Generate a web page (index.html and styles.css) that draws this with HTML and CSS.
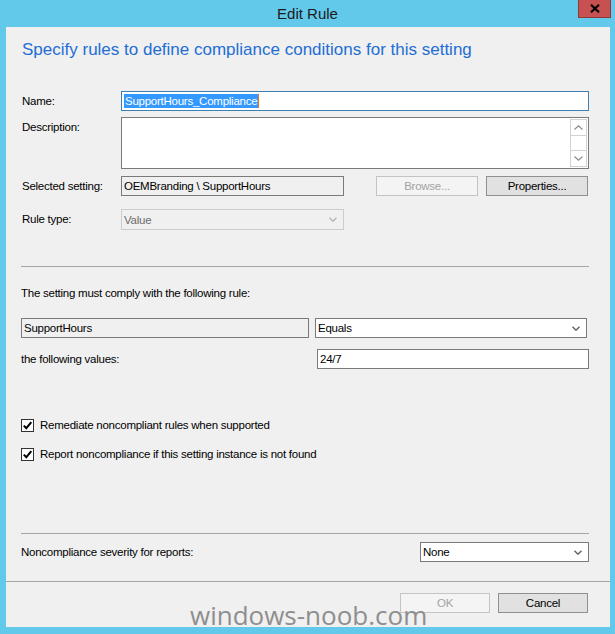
FILE: index.html
```html
<!DOCTYPE html>
<html lang="en">
<head>
    <meta charset="UTF-8">
    <title>Edit Rule</title>
    <link rel="stylesheet" href="styles.css">
</head>
<body>
    <div class="window">
        <div class="titlebar">
            <span class="title">Edit Rule</span>
            <button class="close" title="Close">
                <svg width="10" height="9" viewBox="0 0 10 9"><path d="M1 0.8 L9 8.2 M9 0.8 L1 8.2" stroke="#000" stroke-width="2.2" fill="none"/></svg>
            </button>
        </div>

        <div class="client">
            <div class="header">Specify rules to define compliance conditions for this setting</div>

            <div class="content">
                <div class="row name-row">
                    <span class="label">Name:</span>
                    <div class="field focused"><span class="selected">SupportHours_Compliance</span><span class="caret"></span></div>
                </div>

                <div class="row desc-row">
                    <span class="label">Description:</span>
                    <div class="field textarea">
                        <div class="scrollbar">
                            <span class="sb-btn"><svg width="9" height="5" viewBox="0 0 9 5"><polyline points="0.5,4.5 4.5,0.8 8.5,4.5" stroke="#8a8a8a" stroke-width="1.1" fill="none"/></svg></span>
                            <span class="sb-track"></span>
                            <span class="sb-btn"><svg width="9" height="5" viewBox="0 0 9 5"><polyline points="0.5,0.5 4.5,4.2 8.5,0.5" stroke="#8a8a8a" stroke-width="1.1" fill="none"/></svg></span>
                        </div>
                    </div>
                </div>

                <div class="row setting-row">
                    <span class="label">Selected setting:</span>
                    <div class="field readonly short">OEMBranding \ SupportHours</div>
                    <button class="btn disabled browse">Browse...</button>
                    <button class="btn">Properties...</button>
                </div>

                <div class="row ruletype-row">
                    <span class="label">Rule type:</span>
                    <div class="field combo disabled short">
                        <span>Value</span>
                        <svg width="8" height="5" viewBox="0 0 8 5"><polyline points="0.5,0.8 4,4.2 7.5,0.8" stroke="#b5b5b5" stroke-width="1.4" fill="none"/></svg>
                    </div>
                </div>

                <hr class="sep">

                <p class="rule-intro">The setting must comply with the following rule:</p>

                <div class="row rule-row">
                    <div class="field readonly setting-name">SupportHours</div>
                    <div class="field combo operator">
                        <span>Equals</span>
                        <svg width="8" height="5" viewBox="0 0 8 5"><polyline points="0.5,0.8 4,4.2 7.5,0.8" stroke="#606060" stroke-width="1.4" fill="none"/></svg>
                    </div>
                </div>

                <div class="row values-row">
                    <span class="values-label">the following values:</span>
                    <div class="field operator">24/7</div>
                </div>

                <div class="checks">
                    <label class="check">
                        <span class="box"><svg width="11" height="11" viewBox="0 0 11 11"><path d="M1.8 5.6 L4.3 8.2 L9.3 2.2" stroke="#000" stroke-width="2" fill="none"/></svg></span>
                        Remediate noncompliant rules when supported
                    </label>
                    <label class="check">
                        <span class="box"><svg width="11" height="11" viewBox="0 0 11 11"><path d="M1.8 5.6 L4.3 8.2 L9.3 2.2" stroke="#000" stroke-width="2" fill="none"/></svg></span>
                        Report noncompliance if this setting instance is not found
                    </label>
                </div>

                <hr class="sep sep-low">

                <div class="row severity-row">
                    <span class="values-label">Noncompliance severity for reports:</span>
                    <div class="field combo severity">
                        <span>None</span>
                        <svg width="8" height="5" viewBox="0 0 8 5"><polyline points="0.5,0.8 4,4.2 7.5,0.8" stroke="#606060" stroke-width="1.4" fill="none"/></svg>
                    </div>
                </div>
            </div>

            <div class="footer">
                <button class="btn footer-btn disabled">OK</button>
                <button class="btn footer-btn">Cancel</button>
            </div>

            <div class="watermark">windows-noob.com</div>
        </div>
    </div>
</body>
</html>
```

FILE: styles.css
```css
* {
    box-sizing: border-box;
}

body {
    margin: 0;
    font-family: "Liberation Sans", Arial, sans-serif;
    font-size: 11.5px;
    letter-spacing: -0.25px;
    color: #000;
}

.window {
    width: 615px;
    height: 634px;
    background: #63c9ea;
    display: flex;
    flex-direction: column;
}

/* title bar */
.titlebar {
    height: 27px;
    position: relative;
    display: flex;
    justify-content: center;
    align-items: center;
}

.title {
    font-size: 15px;
    letter-spacing: 0;
    color: #1b1b1b;
}

.close {
    position: absolute;
    top: 0;
    right: 4px;
    width: 33px;
    height: 18px;
    padding: 0;
    background: #c75050;
    border: 1px solid #8c3b3b;
    border-top: none;
    display: flex;
    align-items: center;
    justify-content: center;
}

/* dialog body */
.client {
    flex: 1;
    margin: 0 5px 7px 6px;
    background: #f0f0f0;
    position: relative;
    display: flex;
    flex-direction: column;
}

.header {
    height: 53px;
    padding: 13px 0 0 16px;
    font-size: 17px;
    letter-spacing: 0;
    line-height: 20px;
    color: #1e6ed6;
}

.content {
    padding: 0 21px 0 15px;
}

.row {
    display: flex;
    align-items: flex-start;
}

.label {
    width: 100px;
    flex: none;
    line-height: 20px;
    padding-left: 1px;
}

.field {
    height: 20px;
    border: 1px solid #7a7a7a;
    background: #fff;
    line-height: 18px;
    padding: 0 2px;
    white-space: nowrap;
}

.name-row {
    margin-top: 11px;
}

.focused {
    flex: 1;
    border-color: #3c7fb1;
    display: flex;
    align-items: center;
}

.selected {
    background: #3399ff;
    color: #fff;
    line-height: 14px;
    padding: 0 1px;
}

.caret {
    width: 1px;
    height: 14px;
    background: #e5751f;
}

.desc-row {
    margin-top: 6px;
}

.textarea {
    flex: 1;
    height: 52px;
    position: relative;
}

.scrollbar {
    position: absolute;
    top: 1px;
    right: 1px;
    bottom: 1px;
    width: 17px;
    border: 1px solid #d2d2d2;
    display: flex;
    flex-direction: column;
}

.sb-btn {
    height: 16px;
    display: flex;
    align-items: center;
    justify-content: center;
}

.sb-btn:first-child {
    border-bottom: 1px solid #d2d2d2;
}

.sb-btn:last-child {
    border-top: 1px solid #d2d2d2;
}

.sb-track {
    flex: 1;
}

.setting-row {
    margin-top: 7px;
}

.readonly {
    background: #f0f0f0;
}

.short {
    width: 223px;
}

.btn {
    height: 20px;
    width: 102px;
    padding: 0;
    border: 1px solid #8f8f8f;
    background: #e1e1e1;
    font-family: inherit;
    font-size: 11.5px;
    letter-spacing: -0.25px;
    color: #000;
}

.btn.disabled {
    background: #f4f4f4;
    border-color: #c4c4c4;
    color: #a3a3a3;
}

.browse {
    margin-left: 32px;
    margin-right: 8px;
}

.ruletype-row {
    margin-top: 13px;
}

.combo {
    display: flex;
    align-items: center;
    justify-content: space-between;
    padding: 0 6px 0 2px;
}

.combo.disabled {
    height: 21px;
    background: #f0f0f0;
    border-color: #cccccc;
    color: #6d6d6d;
}

.sep {
    height: 0;
    border: 0;
    border-top: 1px solid #a5a5a5;
    margin: 36px 0 0;
}

/* rule section */
.rule-intro {
    margin: 16px 0 0;
    line-height: 20px;
}

.rule-row {
    margin-top: 15px;
    gap: 6px;
}

.setting-name {
    width: 288px;
}

.operator {
    width: 272px;
}

.values-row {
    margin-top: 11px;
}

.values-label {
    flex: 1;
    line-height: 20px;
}

.checks {
    margin-top: 46px;
    display: flex;
    flex-direction: column;
    gap: 9px;
}

.check {
    height: 20px;
    display: flex;
    align-items: center;
}

.box {
    width: 13px;
    height: 13px;
    margin-right: 6px;
    border: 1px solid #333;
    background: #fff;
    display: flex;
    align-items: center;
    justify-content: center;
}

.sep-low {
    margin-top: 69px;
}

.severity-row {
    margin-top: 8px;
    align-items: center;
}

.severity {
    width: 169px;
}

/* footer */
.footer {
    margin-top: 19px;
    border-top: 1px solid #a5a5a5;
    padding: 11px 22px 0 0;
    display: flex;
    justify-content: flex-end;
    gap: 8px;
}

.footer-btn {
    width: 90px;
}

.watermark {
    position: absolute;
    left: 184px;
    bottom: 2px;
    font-family: "Open Sans", sans-serif;
    font-size: 26px;
    letter-spacing: 0;
    line-height: 20px;
    color: #8e8e8e;
    pointer-events: none;
}
```
